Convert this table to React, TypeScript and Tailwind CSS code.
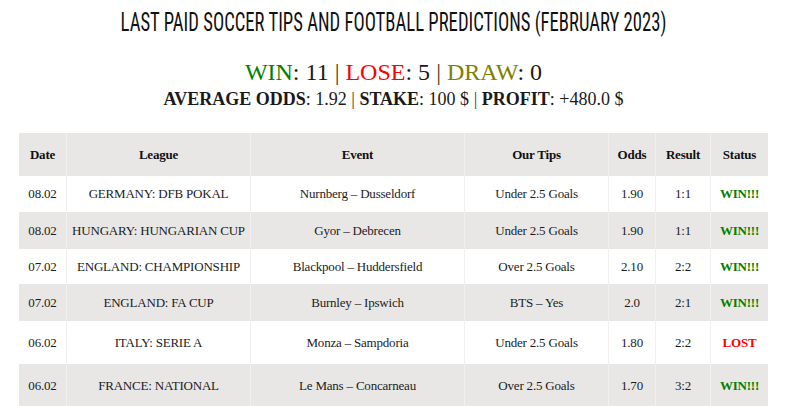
import React from 'react'

type Tip = {
  date: string
  league: string
  event: string
  tip: string
  odds: string
  result: string
  status: 'win' | 'lost'
  h: string
}

const tips: Tip[] = [
  { date: '08.02', league: 'GERMANY: DFB POKAL', event: 'Nurnberg – Dusseldorf', tip: 'Under 2.5 Goals', odds: '1.90', result: '1:1', status: 'win', h: 'h-[36px]' },
  { date: '08.02', league: 'HUNGARY: HUNGARIAN CUP', event: 'Gyor – Debrecen', tip: 'Under 2.5 Goals', odds: '1.90', result: '1:1', status: 'win', h: 'h-[37px]' },
  { date: '07.02', league: 'ENGLAND: CHAMPIONSHIP', event: 'Blackpool – Huddersfield', tip: 'Over 2.5 Goals', odds: '2.10', result: '2:2', status: 'win', h: 'h-[35px]' },
  { date: '07.02', league: 'ENGLAND: FA CUP', event: 'Burnley – Ipswich', tip: 'BTS – Yes', odds: '2.0', result: '2:1', status: 'win', h: 'h-[37px]' },
  { date: '06.02', league: 'ITALY: SERIE A', event: 'Monza – Sampdoria', tip: 'Under 2.5 Goals', odds: '1.80', result: '2:2', status: 'lost', h: 'h-[43px]' },
  { date: '06.02', league: 'FRANCE: NATIONAL', event: 'Le Mans – Concarneau', tip: 'Over 2.5 Goals', odds: '1.70', result: '3:2', status: 'win', h: 'h-[43px]' },
]

const cols = ['w-[48px]', 'w-[184px]', 'w-[214px]', 'w-[144px]', 'w-[47px]', 'w-[55px]', 'w-[57px]']
const heads = ['Date', 'League', 'Event', 'Our Tips', 'Odds', 'Result', 'Status']

const Sep = () => <span className="text-[#4a3b22]"> | </span>

export default function App() {
  return (
    <div className="w-[787px] bg-white text-[#1a1a1a] font-['Liberation_Serif',serif]">
      <h1 className="pt-[8px] h-[38px] whitespace-nowrap text-center text-[25px] leading-[30px] font-normal text-[#111] font-['Roboto',sans-serif] font-stretch-condensed scale-x-[0.747]">
        LAST PAID SOCCER TIPS AND FOOTBALL PREDICTIONS (FEBRUARY 2023)
      </h1>

      <div className="mt-[19px] text-center text-[24px] leading-[30px]">
        <span className="text-[#008000]">WIN</span>: 11
        <Sep />
        <span className="text-[#ff0000]">LOSE</span>: 5
        <Sep />
        <span className="text-[#808000]">DRAW</span>: 0
      </div>
      <div className="mt-[1px] text-center text-[18px] leading-[22px]">
        <b>AVERAGE ODDS</b>: 1.92
        <Sep />
        <b>STAKE</b>: 100 $
        <Sep />
        <b>PROFIT</b>: +480.0 $
      </div>

      <div className="ml-[19px] mt-[23px] w-[749px] text-[13px] tracking-[-0.2px] text-[#1c1c1c]">
        <div className="flex h-[43px] bg-[#e9e7e6] font-bold text-[#111]">
          {heads.map((h, i) => (
            <div
              key={h}
              className={`${cols[i]} flex items-center justify-center border-r border-[#f1f0ef] last:border-r-0`}
            >
              {h}
            </div>
          ))}
        </div>
        {tips.map((t, r) => {
          const cells = [t.date, t.league, t.event, t.tip, t.odds, t.result]
          return (
            <div key={r} className={`flex ${t.h} ${r % 2 === 1 ? 'bg-[#e9e7e6]' : 'bg-white'}`}>
              {cells.map((c, i) => (
                <div key={i} className={`${cols[i]} flex items-center justify-center whitespace-nowrap border-r border-[#f1f0ef]`}>
                  {c}
                </div>
              ))}
              <div
                className={`${cols[6]} flex items-center justify-center font-bold ${
                  t.status === 'win' ? 'text-[#008000]' : 'text-[#ff0000]'
                }`}
              >
                {t.status === 'win' ? 'WIN!!!' : 'LOST'}
              </div>
            </div>
          )
        })}
      </div>
    </div>
  )
}
